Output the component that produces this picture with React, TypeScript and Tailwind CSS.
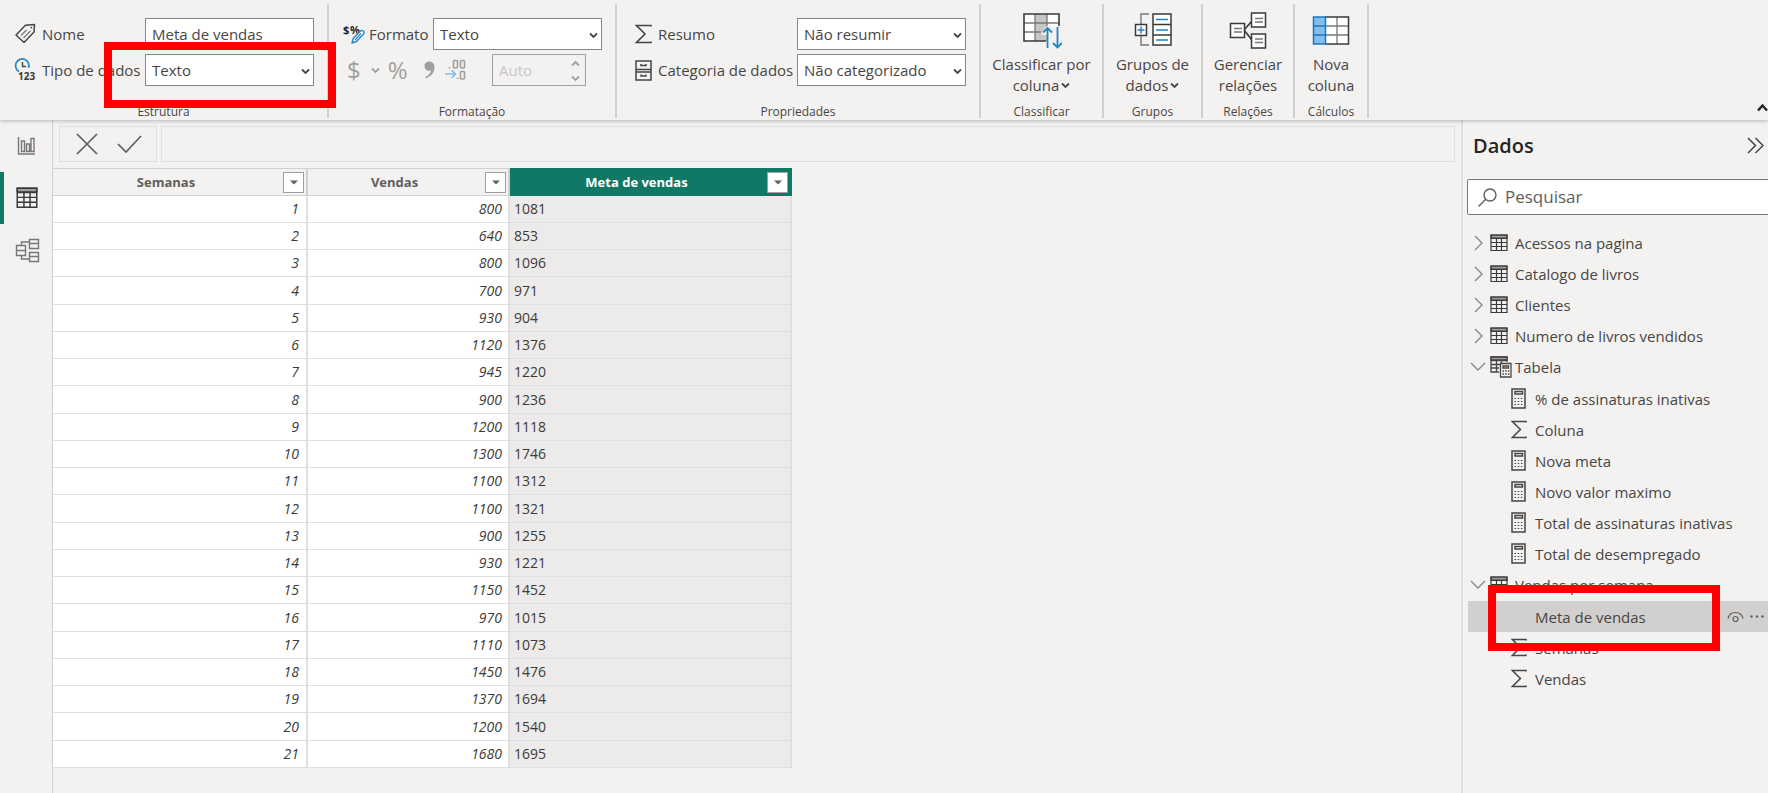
import React from 'react';

const rows = [
  [1, 800, 1081],
  [2, 640, 853],
  [3, 800, 1096],
  [4, 700, 971],
  [5, 930, 904],
  [6, 1120, 1376],
  [7, 945, 1220],
  [8, 900, 1236],
  [9, 1200, 1118],
  [10, 1300, 1746],
  [11, 1100, 1312],
  [12, 1100, 1321],
  [13, 900, 1255],
  [14, 930, 1221],
  [15, 1150, 1452],
  [16, 970, 1015],
  [17, 1110, 1073],
  [18, 1450, 1476],
  [19, 1370, 1694],
  [20, 1200, 1540],
  [21, 1680, 1695],
];

type Field = { name: string; kind: 'measure' | 'sum' | 'text'; selected?: boolean };

const tables: { name: string; calculated?: boolean; fields?: Field[] }[] = [
  { name: 'Acessos na pagina' },
  { name: 'Catalogo de livros' },
  { name: 'Clientes' },
  { name: 'Numero de livros vendidos' },
  {
    name: 'Tabela',
    calculated: true,
    fields: [
      { name: '% de assinaturas inativas', kind: 'measure' },
      { name: 'Coluna', kind: 'sum' },
      { name: 'Nova meta', kind: 'measure' },
      { name: 'Novo valor maximo', kind: 'measure' },
      { name: 'Total de assinaturas inativas', kind: 'measure' },
      { name: 'Total de desempregado', kind: 'measure' },
    ],
  },
  {
    name: 'Vendas por semana',
    fields: [
      { name: 'Meta de vendas', kind: 'text', selected: true },
      { name: 'Semanas', kind: 'sum' },
      { name: 'Vendas', kind: 'sum' },
    ],
  },
];

/* ---------- icons ---------- */

function Chevron({ className = '' }: { className?: string }) {
  return (
    <svg width="9" height="7" viewBox="0 0 9 7" fill="none" stroke="currentColor" strokeWidth="1.800" className={className}>
      <path d="M1 1.5l3.5 3.5L8 1.5" />
    </svg>
  );
}

function TagIcon() {
  return (
    <svg width="22" height="22" viewBox="0 0 22 22" fill="none" stroke="#484644" strokeWidth="1.500" strokeLinejoin="round">
      <path d="M11.500 2.200L20.500 1.500 20 9 10 19.500 2 12z" />
      <path d="M7 12.500l5.500-5.500M9.500 15l7-7" stroke="#797775" strokeWidth="1.200" />
      <circle cx="17.300" cy="4.600" r="0.900" fill="#484644" stroke="none" />
    </svg>
  );
}

function DataTypeIcon() {
  return (
    <svg width="22" height="26" viewBox="0 0 22 26" fill="none">
      <path d="M5 14.500A6.700 6.700 0 1 1 14.500 11" stroke="#2b88c8" strokeWidth="1.700" />
      <path d="M8.500 5v4.500H12" stroke="#484644" strokeWidth="1.400" />
      <text x="4" y="23" fontSize="10" fontWeight="700" fill="#3b3a39" fontFamily="Open Sans, sans-serif">123</text>
    </svg>
  );
}

function FormatIcon() {
  return (
    <svg width="22" height="24" viewBox="0 0 22 24" fill="none">
      <text x="0" y="12" fontSize="11" fontWeight="700" fill="#252423" fontFamily="Open Sans, sans-serif">$</text>
      <text x="7" y="12" fontSize="11" fontWeight="700" fill="#252423" fontFamily="Open Sans, sans-serif">%</text>
      <path d="M9 21l1.200-4.500L17.500 9c2-1.500 4.500 0.500 3 3L13.500 19.500z" fill="#fff" stroke="#2b88c8" strokeWidth="1.500" strokeLinejoin="round" />
      <path d="M12 18l6-6.500" stroke="#2b88c8" strokeWidth="1.200" />
    </svg>
  );
}

function SigmaIcon({ size = 20 }: { size?: number }) {
  return (
    <svg width={Math.round(size * 0.85)} height={size} viewBox="0 0 17 20" fill="none" stroke="#484644" strokeWidth="1.600">
      <path d="M16 2.500V1.500H1.500L10 10l-8.500 8.500H16v-1" />
    </svg>
  );
}

function DrawerIcon() {
  return (
    <svg width="17" height="21" viewBox="0 0 17 21" fill="none" stroke="#484644" strokeWidth="1.500">
      <path d="M1 1h15v19H1zM1 12h15M1 9.500h15" />
      <path d="M6 4v1.500h5V4M6 14.500V16h5v-1.500" />
    </svg>
  );
}

function DecimalsIcon() {
  return (
    <svg width="21" height="22" viewBox="0 0 21 22" fill="none" stroke="#a19f9d" strokeWidth="1.600">
      <rect x="8.500" y="1.500" width="4" height="7.500" rx="1" />
      <rect x="15.500" y="1.500" width="4" height="7.500" rx="1" />
      <rect x="15.500" y="12.500" width="4" height="7.500" rx="1" />
      <path d="M4.500 8v1.500M12.500 18.500V20" />
      <path d="M0 15h10M6.500 11l4 4-4 4" stroke="#83bde3" />
    </svg>
  );
}

function SortColumnIcon() {
  return (
    <svg width="40" height="38" viewBox="0 0 40 38" fill="none">
      <path d="M2 2h35v27H2z" fill="#fff" />
      <path d="M13 2h12v27H13z" fill="#c8c6c4" />
      <path d="M2 11h35M2 20h22M13 2v27M25 2v12" stroke="#797775" strokeWidth="1.300" />
      <path d="M24 29H2V2h35v12" stroke="#3b3a39" strokeWidth="1.600" />
      <path d="M19 20l6-6h13v17H25v-8h-5z" fill="#f3f2f1" />
      <path d="M25.500 36V16M21 20.500l4.500-4.500 4.500 4.500M35.500 15v20M31 31l4.500 4.500L40 31" stroke="#1f83c4" strokeWidth="1.800" />
    </svg>
  );
}

function GroupsIcon() {
  return (
    <svg width="38" height="38" viewBox="0 0 38 38" fill="none">
      <path d="M15 2H7v10M7 24v9h8" stroke="#797775" strokeWidth="1.400" />
      <path d="M1.500 12.500h11v11h-11z" fill="#fff" stroke="#3b3a39" strokeWidth="1.500" />
      <path d="M7 14.500v7M3.500 18h7" stroke="#1f83c4" strokeWidth="1.500" />
      <path d="M19 2h18v31H19zM19 12.500h18M19 23h18" fill="#fff" stroke="#3b3a39" strokeWidth="1.500" />
      <path d="M22 7.500h12M22 18h12M22 28h12" stroke="#1f83c4" strokeWidth="1.500" />
    </svg>
  );
}

function RelationsIcon() {
  return (
    <svg width="38" height="38" viewBox="0 0 38 38" fill="none">
      <path d="M15 18l8-9M15 18l8 10" stroke="#3b3a39" strokeWidth="1.700" />
      <path d="M1.500 11.500h14v14h-14zM22.500 1h14v14h-14zM22.500 22h14v14h-14z" fill="#fff" stroke="#3b3a39" strokeWidth="1.500" />
      <path d="M5 16.500h8M5 20h8M26 6.500h8M26 10h8M26 27h8M26 30.500h8" stroke="#797775" strokeWidth="1.300" />
    </svg>
  );
}

function NewColumnIcon() {
  return (
    <svg width="38" height="38" viewBox="0 0 38 38" fill="none">
      <path d="M1.500 5h35v27h-35z" fill="#fff" />
      <path d="M1.500 5h12v27h-12z" fill="#83beec" />
      <path d="M13 14h23M13 23h23M25 5v27" stroke="#797775" strokeWidth="1.300" />
      <path d="M13 5h23.500v27H13" stroke="#3b3a39" strokeWidth="1.500" />
      <path d="M1.500 5h12v27h-12zM1.500 14h12M1.500 23h12" stroke="#1a78c2" strokeWidth="1.500" />
    </svg>
  );
}

function GridIcon({ size = 18 }: { size?: number }) {
  return (
    <svg width={size} height={size} viewBox="0 0 18 18" fill="none" stroke="#3b3a39" strokeWidth="1.200">
      <path d="M1 1h16v3H1z" fill="#a19f9d" />
      <path d="M1 1h16v15.500H1zM1 4.500h16M1 8.500h16M1 12.500h16M6.500 4.500v12M11.500 4.500v12" />
    </svg>
  );
}

function CalcTableIcon() {
  return (
    <svg width="22" height="22" viewBox="0 0 22 22" fill="none" stroke="#484644" strokeWidth="1.300">
      <path d="M1 1h16v3H1z" fill="#a19f9d" />
      <path d="M9 16H1V1h16v5M1 4.500h16M1 8.500h9M1 12h8M6.500 4.500V16M11.500 4.500V7" />
      <path d="M10.500 7.500h10.500v13.500H10.500z" fill="#f3f2f1" />
      <path d="M13 10h5.500v2H13z" />
      <path d="M12.500 15h7M12.500 18h7" strokeDasharray="1.500 1.200" />
    </svg>
  );
}

function MeasureIcon() {
  return (
    <svg width="15" height="21" viewBox="0 0 15 21" fill="none" stroke="#484644" strokeWidth="1.500">
      <path d="M1 1h13v19H1z" />
      <path d="M4 3.500h7.500V6H4z" />
      <path d="M3.500 10.500h9M3.500 13.500h9M3.500 16.500h9" strokeWidth="1.200" strokeDasharray="1.500 1.700" />
    </svg>
  );
}

function ReportIcon() {
  return (
    <svg width="19" height="20" viewBox="0 0 19 20" fill="none" stroke="#797775" strokeWidth="1.400">
      <path d="M1.500 1v17H18" />
      <path d="M4.500 5h3v10.500h-3zM9.500 8h3v7.500h-3zM14 2.500h3v13h-3z" />
    </svg>
  );
}

function ModelIcon() {
  return (
    <svg width="25" height="25" viewBox="0 0 25 25" fill="none" stroke="#797775" strokeWidth="1.400">
      <path d="M1.500 7.500h9v10h-9zM1.500 12.500h9M14.500 1.500h9v9h-9zM14.500 5.500h9M14.500 14.500h9v9h-9zM14.500 18.500h9" />
      <path d="M6.500 7.500V4h8M6.500 17.500v3.500h8" />
    </svg>
  );
}

function EyeIcon() {
  return (
    <svg width="17" height="12" viewBox="0 0 17 12" fill="none" stroke="#605e5c" strokeWidth="1.200">
      <path d="M1 7.500c1-4 4-6 7.500-6s6.500 2 7.500 6" />
      <circle cx="8.500" cy="8" r="2.500" />
    </svg>
  );
}

/* ---------- ribbon ---------- */

function RibbonGroup({ title, className = '', children }: { title: string; className?: string; children: React.ReactNode }) {
  return (
    <section className={`relative flex flex-col justify-between border-r-2 border-[#d2d0ce] shrink-0 ${className}`}>
      {children}
      <h2 className="text-center text-[12px] leading-3 text-[#484644]">{title}</h2>
    </section>
  );
}

function SelectBox({ id, value, options }: { id: string; value: string; options: string[] }) {
  return (
    <div className="relative">
      <select
        id={id}
        defaultValue={value}
        className="block w-[169px] h-8 appearance-none border border-[#8a8886] bg-white pl-1.5 pr-6 text-[15px] leading-5"
      >
        {options.map((o) => (
          <option key={o}>{o}</option>
        ))}
      </select>
      <Chevron className="pointer-events-none absolute right-1 top-3.5" />
    </div>
  );
}

function BigButton({ icon, lines, menu, className }: { icon: React.ReactNode; lines: string[]; menu?: boolean; className: string }) {
  return (
    <button type="button" className={`flex flex-col items-center pt-2 text-[15px] leading-[21px] ${className}`}>
      <span className="mb-1 flex h-[38px] items-center">{icon}</span>
      <span>{lines[0]}</span>
      <span className="flex items-center gap-0.5">
        {lines[1]}
        {menu && <Chevron />}
      </span>
    </button>
  );
}

function Ribbon() {
  return (
    <header className="relative z-10 flex h-[120px] bg-[#f3f2f1] pt-1 pb-0.5 shadow-[0_1px_4px_rgba(0,0,0,0.25)]">
      <RibbonGroup title="Estrutura" className="w-[329px]">
        <div className="flex flex-col gap-1 pl-3.5 pt-3.5">
          <div className="flex items-center">
            <TagIcon />
            <label htmlFor="nome" className="ml-1.5 w-[103px] text-[15px]">Nome</label>
            <input id="nome" defaultValue="Meta de vendas" className="h-8 w-[169px] border border-[#8a8886] bg-white px-1.5 text-[15px]" />
          </div>
          <div className="flex h-8 items-center">
            <DataTypeIcon />
            <label htmlFor="tipo" className="ml-1.5 w-[103px] whitespace-nowrap text-[15px]">Tipo de dados</label>
            <SelectBox id="tipo" value="Texto" options={['Texto', 'Número inteiro', 'Número decimal', 'Data']} />
          </div>
        </div>
        <div className="pointer-events-none absolute left-[104px] top-[38px] z-10 h-[66px] w-[232px] border-8 border-[#ff0000]" />
      </RibbonGroup>

      <RibbonGroup title="Formatação" className="w-72">
        <div className="flex flex-col gap-1 pl-3.5 pt-3.5">
          <div className="flex items-center">
            <FormatIcon />
            <label htmlFor="formato" className="ml-1 w-16 text-[15px]">Formato</label>
            <SelectBox id="formato" value="Texto" options={['Texto']} />
          </div>
          <div className="flex h-8 items-center text-[#a19f9d]">
            <button type="button" disabled aria-label="Moeda" className="flex items-center gap-2.5 pl-1 text-[24px] leading-8">
              $ <Chevron />
            </button>
            <button type="button" disabled aria-label="Porcentagem" className="ml-2 text-[24px] leading-8">%</button>
            <button type="button" disabled aria-label="Separador de milhar" className="ml-4">
              <svg width="11" height="18" viewBox="0 0 11 18" fill="currentColor">
                <path d="M5 0.500c3.500 0 5.500 2.300 5.500 6 0 5-3.500 9-8.500 10.800L1.300 16C4.500 14.500 6.500 12.500 7 9.500 3.500 10.800 0.500 8.500 0.500 5.300 0.500 2.500 2.400 0.500 5 0.500z" />
              </svg>
            </button>
            <button type="button" disabled aria-label="Casas decimais" className="ml-2.5">
              <DecimalsIcon />
            </button>
            <div className="relative ml-auto mr-[29px]">
              <input aria-label="Número de casas decimais" disabled defaultValue="Auto" className="block h-8 w-[94px] border border-[#a19f9d] px-1.5 text-[15px] text-[#c8c6c4]" />
              <Chevron className="absolute right-1.5 top-1.5 rotate-180" />
              <Chevron className="absolute bottom-1 right-1.5" />
            </div>
          </div>
        </div>
      </RibbonGroup>

      <RibbonGroup title="Propriedades" className="w-[364px]">
        <div className="flex flex-col gap-1 pl-[18px] pt-3.5">
          <div className="flex items-center">
            <SigmaIcon />
            <label htmlFor="resumo" className="ml-1.5 w-[139px] text-[15px]">Resumo</label>
            <SelectBox id="resumo" value="Não resumir" options={['Não resumir', 'Soma', 'Média']} />
          </div>
          <div className="flex items-center">
            <DrawerIcon />
            <label htmlFor="categoria" className="ml-1.5 w-[139px] whitespace-nowrap text-[15px]">Categoria de dados</label>
            <SelectBox id="categoria" value="Não categorizado" options={['Não categorizado', 'Endereço', 'Cidade']} />
          </div>
        </div>
      </RibbonGroup>

      <RibbonGroup title="Classificar">
        <BigButton icon={<SortColumnIcon />} lines={['Classificar por', 'coluna']} menu className="w-[121px]" />
      </RibbonGroup>
      <RibbonGroup title="Grupos">
        <BigButton icon={<GroupsIcon />} lines={['Grupos de', 'dados']} menu className="w-[97px]" />
      </RibbonGroup>
      <RibbonGroup title="Relações">
        <BigButton icon={<RelationsIcon />} lines={['Gerenciar', 'relações']} className="w-[90px]" />
      </RibbonGroup>
      <RibbonGroup title="Cálculos">
        <BigButton icon={<NewColumnIcon />} lines={['Nova', 'coluna']} className="w-[72px]" />
      </RibbonGroup>

      <button type="button" aria-label="Recolher faixa de opções" className="ml-auto self-end pb-1.5 text-[#252423]">
        <svg width="11" height="9" viewBox="0 0 11 9" fill="none" stroke="currentColor" strokeWidth="2.500">
          <path d="M1 7.500L5.500 2.500 10 7.500" />
        </svg>
      </button>
    </header>
  );
}

/* ---------- body ---------- */

function ViewRail() {
  return (
    <nav className="flex w-[53px] shrink-0 flex-col border-r border-[#d2d0ce]">
      <button type="button" aria-label="Relatório" className="flex h-[52px] items-center pl-[17px]"><ReportIcon /></button>
      <button type="button" aria-label="Dados" aria-current="page" className="flex h-[52px] items-center border-l-4 border-[#117865] pl-3"><GridIcon size={22} /></button>
      <button type="button" aria-label="Modelo" className="flex h-[52px] items-center pl-[15px]"><ModelIcon /></button>
    </nav>
  );
}

function HeaderCell({ title, active, className }: { title: string; active?: boolean; className: string }) {
  return (
    <th scope="col" className={`h-7 border-y border-r-2 p-0 ${active ? 'border-[#117865] bg-[#117865] text-white' : 'border-[#d2d0ce] bg-[#f3f2f1] text-[#605e5c]'} ${className}`}>
      <div className="flex items-center pr-0.5">
        <span className="flex-1 pr-1 text-center text-[13px] font-bold leading-5">{title}</span>
        <button type="button" aria-label={`Filtrar ${title}`} className="flex size-[21px] items-center justify-center border border-[#a19f9d] bg-white text-[#605e5c]">
          <svg width="8" height="5" viewBox="0 0 8 5" fill="currentColor"><path d="M0 0.500h8L4 4.500z" /></svg>
        </button>
      </div>
    </th>
  );
}

function DataGrid() {
  return (
    <table className="w-[739px] table-fixed border-separate border-spacing-0 text-[14px] leading-5 text-[#3b3a39]">
      <thead>
        <tr>
          <HeaderCell title="Semanas" className="w-[255px]" />
          <HeaderCell title="Vendas" className="w-[202px]" />
          <HeaderCell title="Meta de vendas" active className="w-[282px]" />
        </tr>
      </thead>
      <tbody>
        {rows.map(([semana, vendas, meta]) => (
          <tr key={semana} className="h-[27px] nth-[4n]:h-7">
            <td className="border-b border-r-2 border-[#e1dfdd] bg-white p-0 pr-[7px] text-right italic">{semana}</td>
            <td className="border-b border-r-2 border-[#e1dfdd] bg-white p-0 pr-1.5 text-right italic">{vendas}</td>
            <td className="border-b border-r-2 border-[#e1dfdd] bg-[#edebe9] p-0 pl-1">{meta}</td>
          </tr>
        ))}
      </tbody>
    </table>
  );
}

function FormulaBar() {
  return (
    <div className="flex gap-1 px-1.5 py-1.5">
      <div className="flex h-9 w-[98px] items-center justify-between border border-[#e1dfdd] pl-4 pr-3.5 text-[#605e5c]">
        <button type="button" aria-label="Cancelar">
          <svg width="22" height="22" viewBox="0 0 22 22" fill="none" stroke="currentColor" strokeWidth="1.700"><path d="M1 1l20 20M21 1L1 21" /></svg>
        </button>
        <button type="button" aria-label="Confirmar">
          <svg width="25" height="20" viewBox="0 0 25 20" fill="none" stroke="currentColor" strokeWidth="1.700"><path d="M1 10l8 8L24 2" /></svg>
        </button>
      </div>
      <input aria-label="Fórmula" className="h-9 min-w-0 flex-1 border border-[#e1dfdd] px-2 text-[15px]" />
    </div>
  );
}

function FieldIcon({ kind }: { kind: Field['kind'] }) {
  if (kind === 'measure') return <MeasureIcon />;
  if (kind === 'sum') return <SigmaIcon size={19} />;
  return null;
}

function DataPane() {
  return (
    <aside className="w-[307px] shrink-0 overflow-hidden border-l-2 border-[#e1dfdd]">
      <div className="flex h-[51px] items-center justify-between pl-2.5 pr-1">
        <h2 className="text-[20px] font-semibold leading-6 text-[#252423]">Dados</h2>
        <button type="button" aria-label="Recolher painel">
          <svg width="17" height="17" viewBox="0 0 17 17" fill="none" stroke="#484644" strokeWidth="1.500"><path d="M1 1l7.500 7.500L1 16M8.500 1L16 8.500 8.500 16" /></svg>
        </button>
      </div>
      <div className="-mr-1 ml-1 mt-2 flex h-9 items-center rounded-xs border border-[#797775] bg-white pl-2.5">
        <svg width="19" height="19" viewBox="0 0 19 19" fill="none" stroke="#605e5c" strokeWidth="1.400">
          <circle cx="12" cy="7" r="6" /><path d="M7.500 11.500L0.500 18.500" />
        </svg>
        <input type="search" aria-label="Pesquisar" placeholder="Pesquisar" className="ml-2 min-w-0 flex-1 text-[17px] placeholder:text-[#605e5c]" />
      </div>

      <ul className="ml-[5px] mt-3 text-[15px] leading-5">
        {tables.map((t) => (
          <li key={t.name}>
            <button type="button" aria-expanded={!!t.fields} className="flex h-[31px] w-full items-center">
              <span className="flex w-5 justify-center">
                {t.fields ? (
                  <svg width="16" height="9" viewBox="0 0 16 9" fill="none" stroke="#8a8886" strokeWidth="1.400"><path d="M1 1l7 7 7-7" /></svg>
                ) : (
                  <svg width="9" height="16" viewBox="0 0 9 16" fill="none" stroke="#8a8886" strokeWidth="1.400"><path d="M1 1l7 7-7 7" /></svg>
                )}
              </span>
              <span className="flex w-[27px] pl-0.5">{t.calculated ? <CalcTableIcon /> : <GridIcon />}</span>
              {t.name}
            </button>
            {t.fields && (
              <ul className="pt-px">
                {t.fields.map((f) => (
                  <li key={f.name} className={`relative flex h-[31px] items-center ${f.selected ? 'bg-[#d2d0ce]' : ''}`}>
                    <button type="button" className="flex flex-1 items-center pl-[43px]">
                      <span className="flex w-6"><FieldIcon kind={f.kind} /></span>
                      {f.name}
                    </button>
                    {f.selected && (
                      <>
                        <button type="button" aria-label="Ocultar"><EyeIcon /></button>
                        <button type="button" aria-label="Mais opções" className="pl-1.5 pr-1">
                          <svg width="14" height="3" viewBox="0 0 14 3" fill="#605e5c"><circle cx="1.500" cy="1.500" r="1.200" /><circle cx="7" cy="1.500" r="1.200" /><circle cx="12.500" cy="1.500" r="1.200" /></svg>
                        </button>
                        <div className="pointer-events-none absolute -top-4 left-5 z-10 h-[66px] w-[232px] border-8 border-[#ff0000]" />
                      </>
                    )}
                  </li>
                ))}
              </ul>
            )}
          </li>
        ))}
      </ul>
    </aside>
  );
}

export default function App() {
  return (
    <div className="flex min-h-screen flex-col overflow-hidden bg-[#f3f2f1] font-['Open_Sans','Noto_Sans',sans-serif] text-[#484644]">
      <Ribbon />
      <div className="flex flex-1">
        <ViewRail />
        <main className="min-w-0 flex-1">
          <FormulaBar />
          <DataGrid />
        </main>
        <DataPane />
      </div>
    </div>
  );
}
